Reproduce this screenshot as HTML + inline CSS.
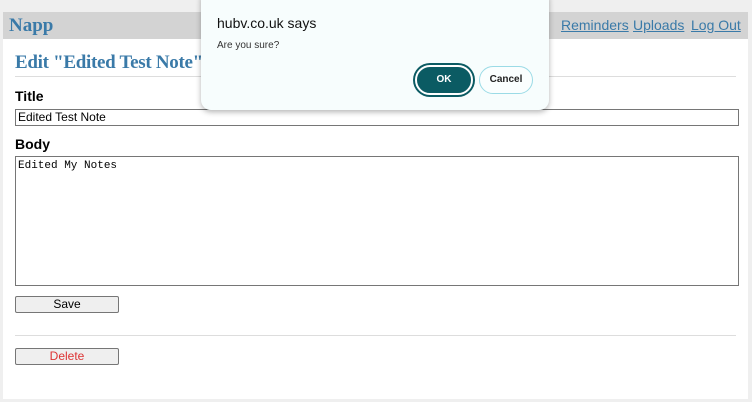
<!DOCTYPE html>
<html><head><style>
body{margin:0;width:752px;height:402px;background:#efefef;position:relative;overflow:hidden;font-family:"Liberation Sans",sans-serif}
.main{position:absolute;left:3px;top:12px;width:745px;height:387px;background:#fff}
.hdr{position:absolute;left:0;top:0;width:745px;height:27px;background:#d3d3d3}
.napp{position:absolute;left:6px;top:3px;font:bold 19px "Liberation Serif",serif;color:#3a7aa8}
.nav{position:absolute;top:5px;font-size:14px;color:#3a7aa8;text-decoration:underline}
h1{position:absolute;left:12px;top:40px;margin:0;font:bold 19px "Liberation Serif",serif;color:#3a7aa8;letter-spacing:-0.3px}
.hr{position:absolute;left:12px;width:721px;height:1px;background:#ddd}
.lbl{position:absolute;left:12px;font-weight:bold;font-size:14px;color:#000}
.inp{position:absolute;left:12px;width:718px;border:1px solid #767676;font-size:12px;padding:0 2px;box-sizing:content-box}
.btn{position:absolute;left:12px;width:102px;height:15px;border:1px solid #767676;background:#efefef;border-radius:2px;font-size:12px;text-align:center;line-height:15px}
.dlg{position:absolute;left:201px;top:-10px;width:348px;height:120px;background:#f7fdfd;border-radius:10px;box-shadow:0 2px 6px rgba(0,0,0,.3)}
</style></head><body>
<div class="main">
<div class="hdr"><span class="napp">Napp</span>
<span class="nav" style="left:558px">Reminders</span><span class="nav" style="left:630px">Uploads</span><span class="nav" style="left:688px">Log Out</span></div>
<h1>Edit "Edited Test Note"</h1>
<div class="hr" style="top:64px"></div>
<div class="lbl" style="top:76px">Title</div>
<div class="inp" style="top:97px;height:15px;line-height:15px">Edited Test Note</div>
<div class="lbl" style="top:124px">Body</div>
<div class="inp" style="top:144px;height:125px;font:11px 'Liberation Mono',monospace;padding-top:3px">Edited My Notes</div>
<div class="btn" style="top:284px">Save</div>
<div class="hr" style="top:323px"></div>
<div class="btn" style="top:336px;color:#d33">Delete</div>
</div>
<div class="dlg">
<div style="position:absolute;left:16px;top:25px;font-size:14px;color:#111">hubv.co.uk says</div>
<div style="position:absolute;left:16px;top:50px;font-size:10px;color:#333">Are you sure?</div>
<div style="position:absolute;left:214px;top:75px;width:54px;height:26px;border-radius:16px;background:#0b5b63;border:2px solid #fff;box-shadow:0 0 0 2px #0b5b63;color:#fff;font-weight:bold;font-size:10px;text-align:center;line-height:26px">OK</div>
<div style="position:absolute;left:278px;top:76px;width:52px;height:26px;border-radius:14px;border:1px solid #9bdbe6;background:#fafefe;color:#222;font-size:10px;font-weight:bold;text-align:center;line-height:26px">Cancel</div>
</div>
</body></html>
